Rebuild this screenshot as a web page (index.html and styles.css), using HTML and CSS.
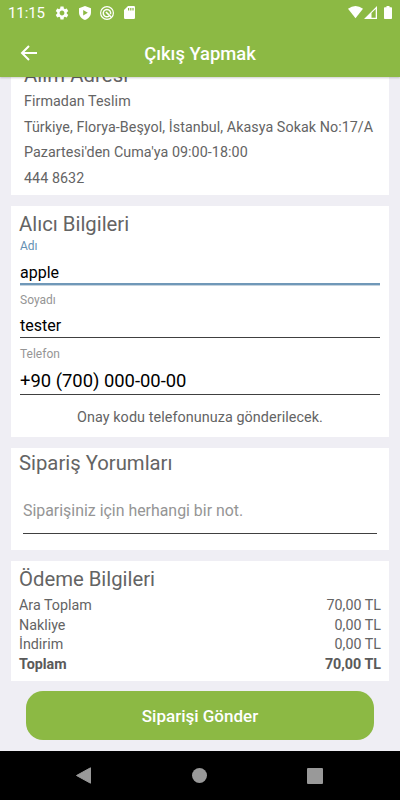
FILE: index.html
```html
<!DOCTYPE html>
<html lang="tr">
<head>
    <meta charset="UTF-8">
    <meta name="viewport" content="width=device-width, initial-scale=1.0">
    <title>Çıkış Yapmak</title>
    <link rel="stylesheet" href="styles.css">
</head>
<body>

<header>
    <div class="status-bar">
        <span class="clock">11:15</span>
        <svg class="gear" width="16" height="16" viewBox="0 0 24 24"><path d="M19.14 12.94c.04-.3.06-.61.06-.94 0-.32-.02-.64-.07-.94l2.03-1.58c.18-.14.23-.41.12-.61l-1.92-3.32c-.12-.22-.37-.29-.59-.22l-2.39.96c-.5-.38-1.03-.7-1.62-.94l-.36-2.54c-.04-.24-.24-.41-.48-.41h-3.84c-.24 0-.43.17-.47.41l-.36 2.54c-.59.24-1.13.57-1.62.94l-2.39-.96c-.22-.08-.47 0-.59.22L2.74 8.87c-.12.21-.08.47.12.61l2.03 1.58c-.05.3-.09.63-.09.94s.02.64.07.94l-2.03 1.58c-.18.14-.23.41-.12.61l1.92 3.32c.12.22.37.29.59.22l2.39-.96c.5.38 1.03.7 1.62.94l.36 2.54c.05.24.24.41.48.41h3.84c.24 0 .44-.17.47-.41l.36-2.54c.59-.24 1.13-.56 1.62-.94l2.39.96c.22.08.47 0 .59-.22l1.92-3.32c.12-.22.07-.47-.12-.61l-2.01-1.58zM12 15.6c-1.98 0-3.6-1.62-3.6-3.6s1.62-3.6 3.6-3.6 3.6 1.62 3.6 3.6-1.62 3.6-3.6 3.6z"/></svg>
        <svg class="shield" width="12" height="14" viewBox="0 0 12 14"><path fill-rule="evenodd" d="M6 0L12 2.200V6.500C12 10 9.600 12.800 6 14C2.400 12.800 0 10 0 6.500V2.200ZM4.200 4V9.600L8.800 6.800Z"/></svg>
        <svg class="disc" width="14" height="14" viewBox="0 0 14 14"><g fill="none" stroke="#fff"><circle cx="7" cy="7" r="6.400" stroke-width="1.200"/><path d="M9 10.200A3.700 3.700 0 1 1 10.500 8.200" stroke-width="1.500"/><path d="M6 6L11 11" stroke-width="1.700"/></g></svg>
        <svg class="sd" width="11" height="13" viewBox="0 0 11 13"><path fill-rule="evenodd" d="M4 0H9.800Q11 0 11 1.200V11.800Q11 13 9.800 13H1.200Q0 13 0 11.800V4ZM4 2V4.500H5.200V2ZM6.200 2V4.500H7.400V2ZM8.400 2V4.500H9.600V2Z"/></svg>
        <svg class="wifi" width="15" height="13" viewBox="0 0 15 13"><path d="M0 2.700Q7.500-2.700 15 2.700L7.500 12.300Z"/></svg>
        <svg class="signal" width="13" height="13" viewBox="0 0 13 13"><path fill-rule="evenodd" d="M0 13L13 0V13ZM7.500 7V11.700H11.700V3Z"/></svg>
        <svg class="battery" width="8" height="13" viewBox="0 0 8 13"><path d="M2.500 0H5.500V1.200H7.200Q8 1.200 8 2V12.200Q8 13 7.200 13H.8Q0 13 0 12.200V2Q0 1.200 .8 1.200H2.500Z"/></svg>
    </div>
    <div class="title-bar">
        <svg class="back" width="18" height="16" viewBox="0 0 18 16"><path d="M17 8H2M9 1L2 8L9 15" fill="none" stroke="#fff" stroke-width="2"/></svg>
        <h1>Çıkış Yapmak</h1>
    </div>
</header>

<main>
    <section class="card address">
        <h2>Alım Adresi</h2>
        <p>Firmadan Teslim</p>
        <p>Türkiye, Florya-Beşyol, İstanbul, Akasya Sokak No:17/A</p>
        <p>Pazartesi'den Cuma'ya 09:00-18:00</p>
        <p>444 8632</p>
    </section>

    <section class="card buyer">
        <h2>Alıcı Bilgileri</h2>
        <div class="field active">
            <label>Adı</label>
            <div class="value">apple</div>
        </div>
        <div class="field">
            <label>Soyadı</label>
            <div class="value">tester</div>
        </div>
        <div class="field phone">
            <label>Telefon</label>
            <div class="value">+90 (700) 000-00-00</div>
        </div>
        <p class="hint">Onay kodu telefonunuza gönderilecek.</p>
    </section>

    <section class="card comments">
        <h2>Sipariş Yorumları</h2>
        <div class="note">Siparişiniz için herhangi bir not.</div>
    </section>

    <section class="card payment">
        <h2>Ödeme Bilgileri</h2>
        <div class="row"><span>Ara Toplam</span><span>70,00 TL</span></div>
        <div class="row"><span>Nakliye</span><span>0,00 TL</span></div>
        <div class="row"><span>İndirim</span><span>0,00 TL</span></div>
        <div class="row total"><span>Toplam</span><span>70,00 TL</span></div>
    </section>

    <button class="submit">Siparişi Gönder</button>
</main>

<nav>
    <svg width="15" height="17" viewBox="0 0 15 17"><path d="M14.500 .8V16.200L.5 8.500Z" stroke="#999" stroke-linejoin="round"/></svg>
    <svg width="15" height="15" viewBox="0 0 15 15"><circle cx="7.500" cy="7.500" r="7.500"/></svg>
    <svg width="16" height="16" viewBox="0 0 16 16"><rect width="16" height="16" rx="1"/></svg>
</nav>

</body>
</html>
```

FILE: styles.css
```css
* {
    box-sizing: border-box;
}
body {
    margin: 0;
    height: 800px;
    display: flex;
    flex-direction: column;
    overflow: hidden;
    font-family: Roboto, "Liberation Sans", sans-serif;
    font-weight: 400;
    color: #646464;
    background-color: #efeef4;
}
h1, h2, p {
    margin: 0;
}
header {
    flex: none;
    height: 77px;
    color: #fff;
    background-color: #8cb944;
    box-shadow: 0 1px 2px rgba(0, 0, 0, 0.2);
    z-index: 1;
}
.status-bar {
    display: flex;
    align-items: center;
    height: 25px;
    padding: 0 8px;
    fill: #fff;
}
.clock {
    width: 37px;
    font-size: 15px;
    letter-spacing: -0.1px;
    line-height: 26px;
}
.gear {
    margin-left: 9px;
}
.shield {
    margin-left: 9px;
}
.disc {
    margin-left: 9px;
}
.sd {
    margin-left: 10px;
}
.wifi {
    margin-left: auto;
}
.signal {
    margin-left: 1px;
}
.battery {
    margin-left: 7px;
}
.title-bar {
    display: flex;
    align-items: center;
    height: 56px;
    padding: 0 20px;
}
h1 {
    flex: 1;
    padding-right: 18px;
    text-align: center;
    font-size: 18.4px;
    font-weight: 500;
}
main {
    flex: 1;
    min-height: 0;
    display: flex;
    flex-direction: column;
    justify-content: flex-end;
    gap: 11px;
    padding: 0 11px 11px;
    overflow: hidden;
}
.card {
    flex: none;
    padding: 0 8px;
    background-color: #fff;
}
h2 {
    font-size: 20.3px;
    font-weight: 400;
    line-height: 24px;
}
.address {
    padding: 5px 13px 4px;
    font-size: 14.3px;
    letter-spacing: 0.06px;
    line-height: 25.5px;
    white-space: nowrap;
}
.address h2 {
    margin-bottom: 2px;
}
.buyer {
    height: 231px;
    padding: 6px 9px 0;
}
.buyer h2 {
    margin-left: -1px;
}
.field {
    border-bottom: 1px solid #404040;
    margin-bottom: 7px;
}
.field label {
    display: block;
    font-size: 12px;
    line-height: 16px;
    padding-top: 1px;
    color: #959595;
}
.field .value {
    height: 29px;
    font-size: 16px;
    line-height: 36px;
    color: #000;
}
.field.active {
    border-bottom: 2px solid #7098b8;
    box-shadow: 0 1px 0 #c5d3de;
    margin-bottom: 6px;
}
.field.active label {
    padding-top: 2px;
    color: #6490b2;
}
.field.active .value {
    line-height: 37px;
}
.field.phone .value {
    height: 32px;
    font-size: 18.4px;
    line-height: 38px;
}
.hint {
    padding-top: 6px;
    text-align: center;
    font-size: 14.4px;
    letter-spacing: 0.06px;
    line-height: 20px;
}
.comments {
    height: 102px;
    padding-top: 3px;
}
.note {
    height: 59px;
    margin: 0 4px;
    padding-top: 24px;
    border-bottom: 1px solid #404040;
    font-size: 15.9px;
    line-height: 24px;
    color: #959595;
}
.payment {
    height: 120px;
    padding-top: 6px;
}
.payment h2 {
    margin-bottom: 5px;
}
.row {
    display: flex;
    justify-content: space-between;
    font-size: 14.3px;
    line-height: 19.7px;
}
.row.total {
    font-weight: 700;
    color: #5a5a5a;
}
.submit {
    flex: none;
    height: 49px;
    margin: -1px 15px 0;
    border: none;
    border-radius: 17px;
    font-family: inherit;
    font-size: 17px;
    font-weight: 500;
    color: #fff;
    background-color: #8cb944;
}
nav {
    flex: none;
    display: flex;
    justify-content: space-between;
    align-items: center;
    height: 49px;
    padding: 0 77px 0 76px;
    background-color: #000;
    fill: #999;
}
```
